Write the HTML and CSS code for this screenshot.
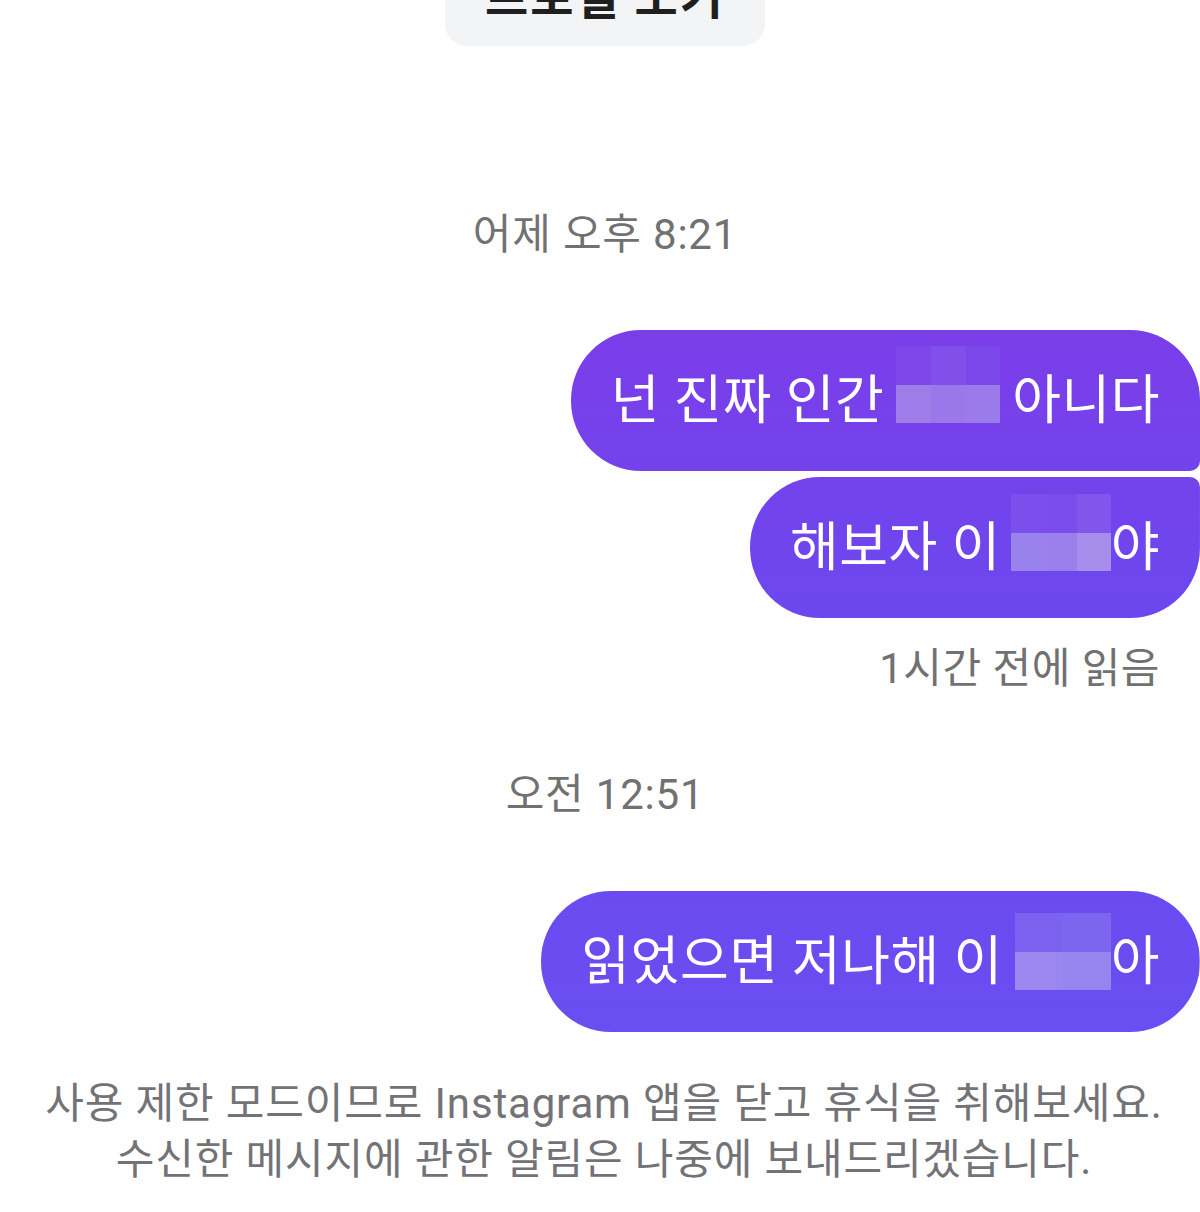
FILE: index.html
```html
<!DOCTYPE html>
<html lang="ko">
<head>
<meta charset="utf-8">
<title>Instagram DM</title>
<link rel="stylesheet" href="styles.css">
</head>
<body>
<div class="screen">
  <div class="profile-wrap">
    <div class="profile-btn">프로필 보기</div>
  </div>

  <div class="stamp stamp-first">어제 오후 8:21</div>

  <div class="row row-first">
    <div class="bubble b-top">
      <span>넌 진짜 인간</span>
      <span class="mosaic m1">
        <i class="c1"></i><i class="c2"></i><i class="c3"></i>
        <i class="c4"></i><i class="c5"></i><i class="c6"></i>
      </span>
      <span>아니다</span>
    </div>
  </div>

  <div class="row row-second">
    <div class="bubble b-bottom">
      <span>해보자 이</span>
      <span class="mosaic m2 tight">
        <i class="c1"></i><i class="c2"></i><i class="c3"></i>
        <i class="c4"></i><i class="c5"></i><i class="c6"></i>
      </span>
      <span>야</span>
    </div>
  </div>

  <div class="read">1시간 전에 읽음</div>

  <div class="stamp stamp-second">오전 12:51</div>

  <div class="row row-third">
    <div class="bubble b-single">
      <span>읽었으면 저나해 이</span>
      <span class="mosaic m3 tight two">
        <i class="c1"></i><i class="c2"></i>
        <i class="c4"></i><i class="c5"></i>
      </span>
      <span>아</span>
    </div>
  </div>

  <p class="notice">사용 제한 모드이므로 Instagram 앱을 닫고 휴식을 취해보세요.<br>수신한 메시지에 관한 알림은 나중에 보내드리겠습니다.</p>
</div>
</body>
</html>
```

FILE: styles.css
```css
html, body {
  margin: 0;
  padding: 0;
  background: #ffffff;
}

body {
  font-family: Roboto, "Noto Sans CJK KR", "Noto Sans", sans-serif;
  width: 1200px;
  height: 1212px;
  overflow: hidden;
}

.screen {
  display: flex;
  flex-direction: column;
}

.profile-wrap {
  display: flex;
  justify-content: center;
}

.profile-btn {
  margin-top: -50px;
  width: 320px;
  height: 96px;
  margin-left: 10px;
  background: #f3f4f6;
  border-radius: 22px;
  color: #1f1f1f;
  font-weight: 700;
  font-size: 47px;
  line-height: 96px;
  text-align: center;
  letter-spacing: 2px;
}

.stamp {
  text-align: center;
  color: #717171;
  font-size: 42px;
  line-height: 56px;
  letter-spacing: 0.8px;
  padding-left: 10px;
}

.stamp-first {
  margin-top: 161px;
}

.stamp-second {
  margin-top: 70px;
}

.row {
  display: flex;
  justify-content: flex-end;
}

.row-first {
  margin-top: 67px;
}

.row-second {
  margin-top: 6px;
}

.row-third {
  margin-top: 68px;
}

.bubble {
  display: flex;
  align-items: center;
  height: 141px;
  padding: 0 40px;
  color: #ffffff;
  font-size: 53px;
  line-height: 70px;
  letter-spacing: 0.5px;
  white-space: nowrap;
  background: linear-gradient(180deg, #8236e6 0px, #7a3ee9 340px, #6d47ee 600px, #6a4cf0 960px, #5f58f3 1212px);
  background-attachment: fixed;
}

.b-top {
  border-radius: 70px 70px 10px 70px;
}

.b-bottom {
  border-radius: 70px 10px 70px 70px;
}

.b-single {
  border-radius: 70px;
}

.mosaic {
  display: grid;
  grid-template-columns: repeat(3, 1fr);
  grid-template-rows: 1fr 1fr;
  width: 104px;
  height: 77px;
  margin: 0 12px;
  align-self: flex-start;
}

.mosaic.tight {
  margin-right: 0;
}

.mosaic.two {
  grid-template-columns: repeat(2, 1fr);
  width: 96px;
}

.mosaic i {
  display: block;
}

.m1 { margin-top: 16px; }
.m1 .c1 { background: #7d46e8; }
.m1 .c2 { background: #834fea; }
.m1 .c3 { background: #7c47e8; }
.m1 .c4 { background: #9e7de9; }
.m1 .c5 { background: #9b78e9; }
.m1 .c6 { background: #9a7be9; }

.m2 { margin-top: 17px; width: 100px; margin-left: 10px; }
.m2 .c1 { background: #7a4fec; }
.m2 .c2 { background: #7b4eec; }
.m2 .c3 { background: #8156ec; }
.m2 .c4 { background: #9a82ec; }
.m2 .c5 { background: #9b80ec; }
.m2 .c6 { background: #a68dec; }

.m3 { margin-top: 22px; }
.m3 .c1 { background: #7c63ef; }
.m3 .c2 { background: #7d66ef; }
.m3 .c4 { background: #9a87ef; }
.m3 .c5 { background: #9685ef; }

.read {
  margin-top: 23px;
  text-align: right;
  padding-right: 40px;
  color: #717171;
  font-size: 42px;
  line-height: 56px;
  letter-spacing: 0.5px;
}

.notice {
  margin: 44px 0 0;
  text-align: center;
  color: #737377;
  font-size: 42px;
  line-height: 56px;
  letter-spacing: 0.85px;
  padding-left: 8px;
}
```
